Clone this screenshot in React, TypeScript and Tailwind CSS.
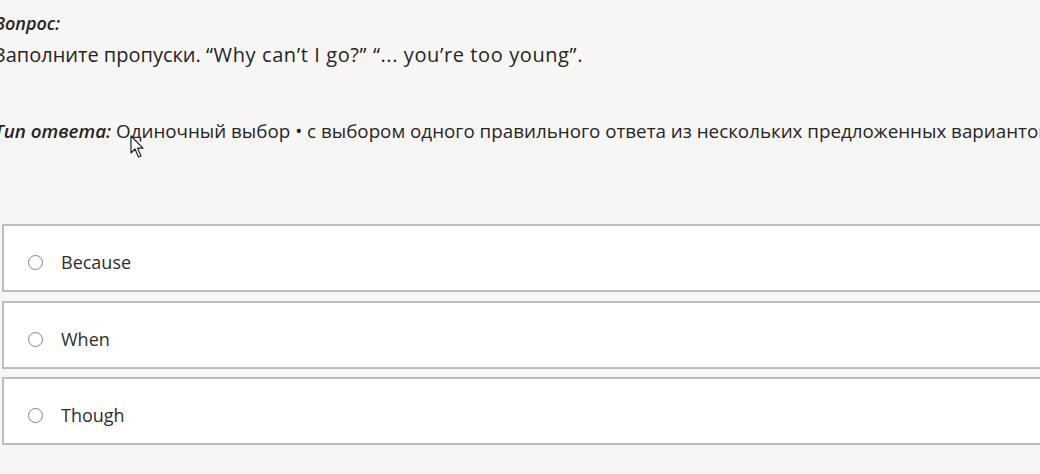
import React from "react";

const OPTIONS = ["Because", "When", "Though"];

function Cursor() {
  return (
    <svg
      className="absolute left-[130px] top-[135px]"
      width="17"
      height="24"
      viewBox="0 0 17 24"
      fill="none"
    >
      <path
        d="M1 1 L1 18 L5 14 L8.5 22 L11 21 L7.6 13.2 L13 13.2 Z"
        fill="#ffffff"
        stroke="#222"
        strokeWidth="1.2"
        strokeLinejoin="round"
      />
    </svg>
  );
}

export default function App() {
  return (
    <div
      className="relative w-[1040px] h-[474px] overflow-hidden bg-[#f7f6f4] text-[#252525]"
      style={{ fontFamily: '"Open Sans", "Noto Sans", sans-serif' }}
    >
      <div className="ml-[-6px] w-[1200px] pt-[10px]">
        <p className="text-[18px] font-semibold italic leading-[26px]">Вопрос:</p>
        <p className="mt-[6px] text-[20px] leading-[26px]">
          Заполните пропуски.{" "}
          <span className="tracking-[0.6px]">“Why can’t I go?” “... you’re too young”.</span>
        </p>
        <p className="mt-[50px] text-[18.8px] leading-[26px] whitespace-nowrap">
          <span className="font-semibold italic">Тип ответа:</span> Одиночный выбор • с выбором
          одного правильного ответа из нескольких предложенных вариантов
        </p>
      </div>

      <div className="ml-[2px] mt-[80px] flex w-[1100px] flex-col gap-[8.5px]">
        {OPTIONS.map((opt) => (
          <label
            key={opt}
            className="flex h-[68px] items-center border-2 border-[#bdbdbd] bg-white pl-[24px] pt-[9px]"
          >
            <span className="h-[15px] w-[15px] rounded-full border-[1.5px] border-[#858585] bg-white" />
            <span className="ml-[18px] text-[18px] text-[#2e2e2e]">{opt}</span>
          </label>
        ))}
      </div>

      <Cursor />
    </div>
  );
}
